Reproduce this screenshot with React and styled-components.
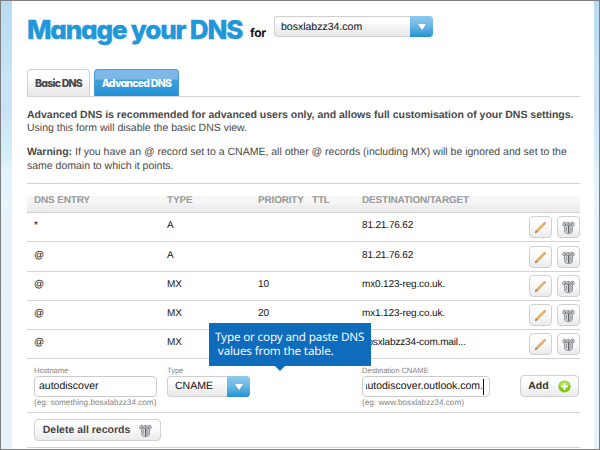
import React from "react";
import styled, { createGlobalStyle } from "styled-components";

const Global = createGlobalStyle`
  * { box-sizing: border-box; }
  body {
    margin: 0;
    background: #fff;
    font-family: "Liberation Sans", Arial, sans-serif;
    text-rendering: geometricPrecision;
  }
`;

const Frame = styled.div`
  position: relative;
  display: grid;
  grid-template-columns: 11px 1fr 5px;
  width: 600px;
  height: 450px;
  border: 1px solid #7f7f7f;
  overflow: hidden;
  background: #fff;
`;
const Edge = styled.div`
  background: linear-gradient(#b8dcf1 0, #bfdff3 40px, #c9e5f7 75px, #cbe2f8 110px, #cfe9f8 125px, #d3edf9 150px, #e2f3fd 170px, #e5f4fd 205px, #e8f1fa 225px, #e9f1f9 100%);
`;
const Page = styled.main`
  padding: 0 14px 0 15px;
  min-width: 0;
`;
const Text = styled.span`
  display: block;
  white-space: nowrap;
  font-size: ${(p) => p.$size || 10.5}px;
  font-weight: ${(p) => (p.$bold ? 700 : 400)};
  letter-spacing: ${(p) => p.$track || 0}px;
  color: ${(p) => p.$color || "#111"};
  line-height: ${(p) => p.$line || 13}px;
`;

const TitleBar = styled.header`
  display: flex;
  align-items: flex-start;
  height: 68px;
`;
const Title = styled.h1`
  margin: 13px 0 0;
  width: 223px;
  font: 800 26px/32px Inter, "Open Sans", sans-serif;
  font-feature-settings: "cv11";
  letter-spacing: -1.18px;
  color: #2196d9;
  -webkit-text-stroke: 0.4px #2196d9;
  paint-order: stroke;
  stroke-linejoin: round;
  text-rendering: auto;
  white-space: nowrap;
`;
const For = styled.span`
  margin-top: 24px;
  width: 24px;
  font: 700 12px/16px Inter, sans-serif;
  letter-spacing: -0.3px;
  color: #151515;
`;
const SelectBox = styled.div`
  display: flex;
  width: ${(p) => p.$width}px;
  height: 21px;
  margin-top: ${(p) => p.$top || 0}px;
  border: 1px solid #cfcfcf;
  border-right: 0;
  border-radius: 4px;
  background: linear-gradient(#fff 0 35%, #f6f6f6 40%, #e9e9e9);
`;
const SelectValue = styled.div`
  flex: 1;
  padding: ${(p) => p.$pad};
`;
const SelectArrow = styled.div`
  display: flex;
  align-items: center;
  justify-content: center;
  width: 23px;
  margin: -1px 0;
  border-radius: 0 4px 4px 0;
  background: linear-gradient(#8ecbed, #66b5e3 50%, #2491d4);
`;

const Tabs = styled.nav`
  display: flex;
  gap: 4px;
  height: 28px;
  border-bottom: 1px solid #d2d2d2;
`;
const Tab = styled.div`
  width: ${(p) => (p.$active ? 85 : 63)}px;
  height: 27px;
  padding-top: 7px;
  text-align: center;
  border: 1px solid ${(p) => (p.$active ? "#459fda" : "#cfcfcf")};
  border-bottom: 0;
  border-radius: 4px 4px 0 0;
  background: ${(p) =>
    p.$active
      ? "linear-gradient(#7db8e8 0 34%, #429fdc 40%, #1f90d5)"
      : "linear-gradient(#fff 0 35%, #f5f5f5 50%, #e9e9e9)"};
  color: ${(p) => (p.$active ? "#fff" : "#484848")};
  font: 800 10.5px/13px Inter, sans-serif;
  font-feature-settings: "cv11";
  letter-spacing: -0.75px;
  text-rendering: auto;
  white-space: nowrap;
`;

const Intro = styled.section`
  height: 86px;
  padding-top: 12px;
`;
const Paragraph = styled.div`
  margin-bottom: 11px;
`;

const grid = `
  display: grid;
  grid-template-columns: 133px 91px 54px 50px 1fr auto;
  padding-left: 7px;
`;
const HeaderRow = styled.div`
  ${grid}
  height: 30px;
  border-top: 1px solid #d0d0d0;
  border-bottom: 1px solid #cfcfcf;
  padding-top: 10px;
  background: linear-gradient(#fff 0 12px, #f6f6f6 13px, #f5f5f5 20px, #f0eeee 21px, #eeebeb);
`;
const Row = styled.div`
  ${grid}
  height: ${(p) => p.$height || 29}px;
  padding-top: ${(p) => (p.$height ? 4 : 3)}px;
  border-bottom: 1px solid #d3d3d3;
`;
const Cell = styled.div`
  padding-top: 3px;
`;
const Actions = styled.div`
  display: flex;
  gap: 5px;
`;
const Button = styled.button`
  display: flex;
  align-items: center;
  justify-content: center;
  gap: ${(p) => p.$gap || 0}px;
  width: ${(p) => p.$width || 23}px;
  height: 22px;
  padding: 0;
  border: 1px solid #d0d0d0;
  border-radius: 4px;
  background: linear-gradient(#fff, #fafafa 45%, #eaeaea);
  font-family: inherit;
  text-rendering: inherit;
`;

const FormRow = styled.div`
  display: grid;
  grid-template-columns: 133px 195px 158px 59px;
  height: 54px;
  padding: 6px 0 0 7px;
  border-bottom: 1px solid #d3d3d3;
`;
const Field = styled.div`
  display: flex;
  flex-direction: column;
`;
const Input = styled.div`
  display: flex;
  align-items: center;
  width: ${(p) => p.$width}px;
  height: 21px;
  padding: 0 5px 0 4px;
  border: 1px solid #cbcbcb;
  border-radius: 4px;
  background: #fff;
`;
const Clip = styled.div`
  display: flex;
  justify-content: flex-end;
  overflow: hidden;
  width: 117px;
  margin-left: -1px;
`;
const Caret = styled.i`
  width: 1px;
  height: 16px;
  background: #111;
`;
const AddSlot = styled.div`
  padding-top: 10px;
`;
const Footer = styled.div`
  height: 35px;
  padding: 6px 0 0 7px;
  border-bottom: 1px solid #d3d3d3;
`;

const Tooltip = styled.div`
  position: absolute;
  left: 208px;
  top: 322px;
  width: 162px;
  height: 43px;
  padding: 7px 0 0 6px;
  background: #0f6cbd;
  color: #f4f9fe;
  font: 11.7px/14px "Noto Sans", sans-serif;
  letter-spacing: -0.17px;
  white-space: pre;
  &::after {
    content: "";
    position: absolute;
    left: 66px;
    top: 43px;
    border: 5px solid transparent;
    border-top-color: #0f6cbd;
    border-bottom: 0;
  }
`;

const Triangle = () => (
  <svg width="8" height="6" viewBox="0 0 8 6"><path d="M0 0h8L4 6z" fill="#fff" /></svg>
);
const Pencil = () => (
  <svg width="13" height="13" viewBox="0 0 13 13">
    <path d="M2.6 10.4 10.8 2" stroke="#c79a55" strokeWidth="2.5" />
    <path d="M2.7 10.1 10.6 1.9" stroke="#f2b961" strokeWidth="1.5" />
    <path d="M1 12l.7-2.6 1.8 1.8z" fill="#68605a" />
    <path d="m9.9 1.7 1-.9 1.4 1.4-.9 1z" fill="#d5a09a" />
  </svg>
);
const Trash = () => (
  <svg width="13" height="13" viewBox="0 0 13 13">
    <path d="M2.2 4h8.6l-.6 7.2-1.8 1.3H4.6l-1.8-1.3z" fill="#d3d5d8" stroke="#777a80" strokeWidth=".7" />
    <path d="M.9 4.4C.1 2.8 1.2 1 2.9 1.2l1.2 1 2.1-.8 2.3.8 1.6-1.1c1.6-.1 2.7 1.4 2 3.2l-1.6.4-1.7-1.2-2.2 1-2.4-1-1.6 1.2z" fill="#e6e7e9" stroke="#777a80" strokeWidth=".8" />
    <path d="M4.3 5.6v4.6M8.9 5.4v5.4" stroke="#8b8e93" strokeWidth=".9" />
    <path d="M6.7 4.6V12" stroke="#4b4e53" strokeWidth="1.1" />
    <path d="M2.2 2.8 4 3.3M5.7 2.9h1.7M9.2 3.3l1.7-.7" stroke="#44474c" strokeWidth=".9" />
  </svg>
);
const Plus = () => (
  <svg width="13" height="13" viewBox="0 0 13 13">
    <circle cx="6.5" cy="6.5" r="6.1" fill="#86c51c" />
    <path d="M1.2 6a5.3 5.3 0 0 1 10.6 0C9 5 4 7 1.2 6z" fill="#addd54" />
    <path d="M6.5 3.2v6.6M3.2 6.5h6.6" stroke="#fff" strokeWidth="2" />
  </svg>
);

const records = [
  ["*", "A", "", "81.21.76.62"],
  ["@", "A", "", "81.21.76.62"],
  ["@", "MX", "10", "mx0.123-reg.co.uk."],
  ["@", "MX", "20", "mx1.123-reg.co.uk."],
  ["@", "MX", "", "bosxlabzz34-com.mail..."],
];

const Value = ({ children }) => (
  <Cell><Text $size={10} $track={-0.15}>{children}</Text></Cell>
);
const Heading = ({ children }) => (
  <Text $size={10} $bold $color="#999" $track={-0.18}>{children}</Text>
);
const Label = ({ children }) => (
  <Text $size={7.7} $line={11} $color="#858585" $track={-0.1}>{children}</Text>
);
const Hint = ({ children }) => (
  <Text $size={8.2} $line={11} $color="#858585">{children}</Text>
);

export default function App() {
  return (
    <>
      <Global />
      <Frame>
        <Edge />
        <Page>
          <TitleBar>
            <Title>Manage your DNS</Title>
            <For>for</For>
            <SelectBox $width={159} $top={15}>
              <SelectValue $pad="4px 0 0 6px"><Text>bosxlabzz34.com</Text></SelectValue>
              <SelectArrow><Triangle /></SelectArrow>
            </SelectBox>
          </TitleBar>
          <Tabs>
            <Tab>Basic DNS</Tab>
            <Tab $active>Advanced DNS</Tab>
          </Tabs>
          <Intro>
            <Paragraph>
              <Text $bold $color="#484848">Advanced DNS is recommended for advanced users only, and allows full customisation of your DNS settings.</Text>
              <Text $color="#484848">Using this form will disable the basic DNS view.</Text>
            </Paragraph>
            <Text $color="#484848"><b>Warning:</b> If you have an @ record set to a CNAME, all other @ records (including MX) will be ignored and set to the</Text>
            <Text $color="#484848" $line={14}>same domain to which it points.</Text>
          </Intro>
          <HeaderRow>
            <Heading>DNS ENTRY</Heading>
            <Heading>TYPE</Heading>
            <Heading>PRIORITY</Heading>
            <Heading>TTL</Heading>
            <Heading>DESTINATION/TARGET</Heading>
          </HeaderRow>
          {records.map(([name, type, priority, target], i) => (
            <Row key={i} $height={i === 1 ? 30 : 0}>
              <Value>{name}</Value>
              <Value>{type}</Value>
              <Value>{priority}</Value>
              <span />
              <Value>{target}</Value>
              <Actions>
                <Button><Pencil /></Button>
                <Button><Trash /></Button>
              </Actions>
            </Row>
          ))}
          <FormRow>
            <Field>
              <Label>Hostname</Label>
              <Input $width={123}><Text>autodiscover</Text></Input>
              <Hint>(eg: something.bosxlabzz34.com)</Hint>
            </Field>
            <Field>
              <Label>Type</Label>
              <SelectBox $width={83}>
                <SelectValue $pad="3px 0 0 7px"><Text>CNAME</Text></SelectValue>
                <SelectArrow><Triangle /></SelectArrow>
              </SelectBox>
            </Field>
            <Field>
              <Label>Destination CNAME</Label>
              <Input $width={128}>
                <Clip><Text>autodiscover.outlook.com.</Text></Clip>
                <Caret />
              </Input>
              <Hint>(eg: www.bosxlabzz34.com)</Hint>
            </Field>
            <AddSlot>
              <Button $width={59} $gap={9}><Text $bold $color="#333">Add</Text><Plus /></Button>
            </AddSlot>
          </FormRow>
          <Footer>
            <Button $width={127} $gap={9}><Text $bold $color="#444">Delete all records</Text><Trash /></Button>
          </Footer>
        </Page>
        <Edge />
        <Tooltip>{"Type or copy and paste DNS\n values from the table."}</Tooltip>
      </Frame>
    </>
  );
}
